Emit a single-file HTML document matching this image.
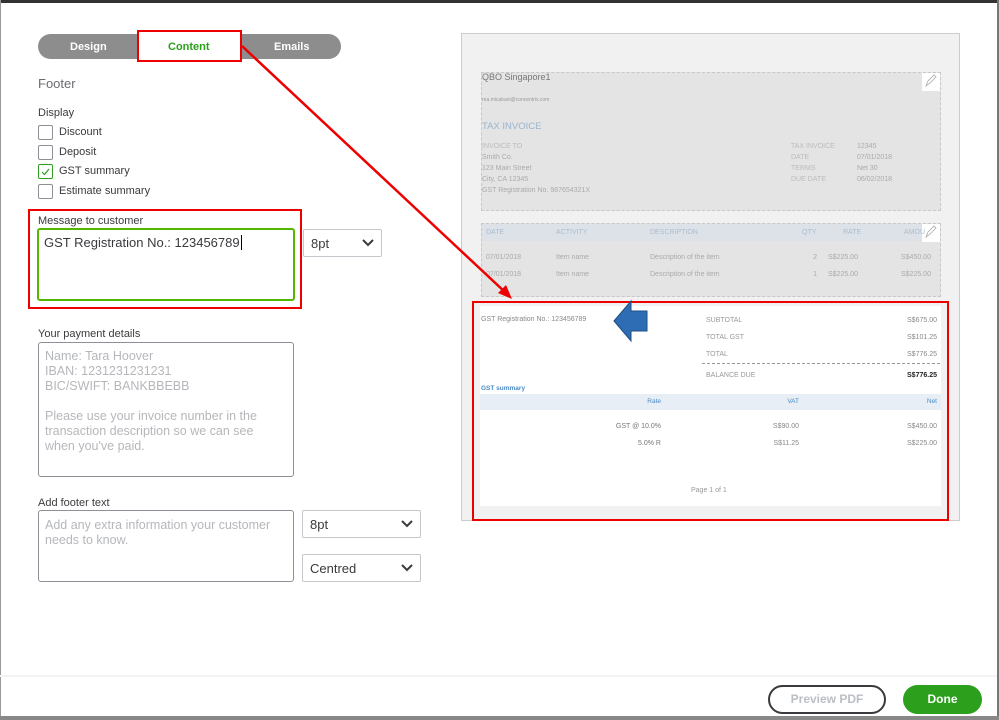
<!DOCTYPE html>
<html><head><meta charset="utf-8"><style>
*{box-sizing:border-box;margin:0;padding:0}
body{width:999px;height:720px;background:#fff;position:relative;overflow:hidden;font-family:"Liberation Sans",sans-serif;color:#393a3d}
.a{position:absolute}
.lbl{font-size:11px;color:#393a3d}
.cb{position:absolute;width:15px;height:15px;border:1px solid #8d9096;border-radius:2px;background:#fff}
.ta{position:absolute;border:1px solid #8d9096;border-radius:3px;background:#fff}
.ph{color:#b5b7bb;font-size:12.5px;line-height:15px}
.sel{position:absolute;border:1px solid #c4c6cb;border-radius:2px;background:#fff;font-size:13px;color:#393a3d;padding:6px 0 0 7px}
.sel svg{position:absolute;right:7px;top:9px}
.s{font-size:7px;color:#999}
.r{text-align:right}
</style></head><body>
<div class="a" style="left:0;top:0;width:999px;height:3px;background:#333"></div>
<div class="a" style="left:0;top:0;width:1px;height:720px;background:#999"></div>
<div class="a" style="left:997px;top:0;width:2px;height:720px;background:#777"></div>
<div class="a" style="left:0;top:716px;width:999px;height:4px;background:#888"></div>
<div class="a" style="left:0;top:675px;width:997px;height:2px;background:#f3f3f6"></div>

<!-- tabs -->
<div class="a" style="left:38px;top:34px;width:303px;height:25px;background:#8d8d8d;border-radius:13px"></div>
<div class="a" style="left:70px;top:41px;font-size:11px;font-weight:bold;color:#fff">Design</div>
<div class="a" style="left:274px;top:41px;font-size:11px;font-weight:bold;color:#fff">Emails</div>
<div class="a" style="left:137px;top:30px;width:105px;height:32px;background:#fff;border:2px solid #e00"></div>
<div class="a" style="left:168px;top:41px;font-size:11px;font-weight:bold;color:#2ca01c">Content</div>

<div class="a" style="left:38px;top:76px;font-size:13px;color:#6b6c72">Footer</div>
<div class="a lbl" style="left:38px;top:107px">Display</div>
<div class="cb" style="left:38px;top:125px"></div><div class="a lbl" style="left:59px;top:126px">Discount</div>
<div class="cb" style="left:38px;top:145px"></div><div class="a lbl" style="left:59px;top:146px">Deposit</div>
<div class="cb" style="left:38px;top:164px;border-color:#2ca01c"><svg width="13" height="13" viewBox="0 0 13 13"><path d="M3 7l2.5 2.5L10 4" stroke="#2ca01c" fill="none" stroke-width="1.2"/></svg></div><div class="a lbl" style="left:59px;top:165px">GST summary</div>
<div class="cb" style="left:38px;top:184px"></div><div class="a lbl" style="left:59px;top:185px">Estimate summary</div>

<div class="a" style="left:28px;top:209px;width:274px;height:100px;border:2px solid #e00"></div>
<div class="a lbl" style="left:38px;top:215px">Message to customer</div>
<div class="ta" style="left:37px;top:228px;width:258px;height:73px;border:2px solid #53b700"></div>
<div class="a" style="left:44px;top:235px;font-size:13px;color:#393a3d">GST Registration No.: 123456789<span style="border-left:1px solid #000;margin-left:1px"></span></div>
<div class="sel" style="left:303px;top:229px;width:79px;height:28px">8pt<svg width="12" height="8"><path d="M1 1l5 5 5-5" stroke="#393a3d" stroke-width="2" fill="none"/></svg></div>

<div class="a lbl" style="left:38px;top:328px">Your payment details</div>
<div class="ta" style="left:38px;top:342px;width:256px;height:135px"></div>
<div class="a ph" style="left:45px;top:349px">Name: Tara Hoover<br>IBAN: 1231231231231<br>BIC/SWIFT: BANKBBEBB<br><br>Please use your invoice number in the<br>transaction description so we can see<br>when you've paid.</div>

<div class="a lbl" style="left:38px;top:497px">Add footer text</div>
<div class="ta" style="left:38px;top:510px;width:256px;height:72px"></div>
<div class="a ph" style="left:45px;top:518px">Add any extra information your customer<br>needs to know.</div>
<div class="sel" style="left:302px;top:510px;width:119px;height:28px">8pt<svg width="12" height="8"><path d="M1 1l5 5 5-5" stroke="#393a3d" stroke-width="2" fill="none"/></svg></div>
<div class="sel" style="left:302px;top:554px;width:119px;height:28px">Centred<svg width="12" height="8"><path d="M1 1l5 5 5-5" stroke="#393a3d" stroke-width="2" fill="none"/></svg></div>

<!-- preview -->
<div class="a" style="left:461px;top:33px;width:499px;height:488px;background:#f1f1f1;border:1px solid #ccc"></div>
<div class="a" style="left:481px;top:72px;width:460px;height:139px;background:#e4e4e4;border:1px dashed #c8c8c8"></div>
<div class="a" style="left:922px;top:73px;width:18px;height:18px;background:#fff"></div>
<div class="a" style="left:482px;top:72px;font-size:9px;color:#777">QBO Singapore1</div>
<div class="a s" style="left:482px;top:97px;font-size:5px">rea.micabani@concentrix.com</div>
<div class="a" style="left:482px;top:121px;font-size:9.5px;color:#9ab4cc">TAX INVOICE</div>
<div class="a s" style="left:482px;top:141px;line-height:11px;color:#bbb">INVOICE TO<br><span style="color:#aaa">Smith Co.<br>123 Main Street<br>City, CA 12345<br>GST Registration No. 987654321X</span></div>
<div class="a s" style="left:791px;top:141px;line-height:11px;color:#bbb">TAX INVOICE<br>DATE<br>TERMS<br>DUE DATE</div>
<div class="a s" style="left:857px;top:141px;line-height:11px;color:#aaa">12345<br>07/01/2018<br>Net 30<br>06/02/2018</div>

<div class="a" style="left:481px;top:223px;width:460px;height:74px;background:#e4e4e4;border:1px dashed #c8c8c8"></div>
<div class="a" style="left:482px;top:224px;width:458px;height:17px;background:#dde2e8"></div>
<div class="a" style="left:922px;top:224px;width:18px;height:18px;background:#fff"></div>
<div class="a s" style="left:486px;top:229px;color:#a9bdd0">DATE</div>
<div class="a s" style="left:556px;top:229px;color:#a9bdd0">ACTIVITY</div>
<div class="a s" style="left:650px;top:229px;color:#a9bdd0">DESCRIPTION</div>
<div class="a s" style="left:802px;top:229px;color:#a9bdd0">QTY</div>
<div class="a s" style="left:843px;top:229px;color:#a9bdd0">RATE</div>
<div class="a s" style="left:904px;top:229px;color:#a9bdd0">AMOU</div>
<div class="a s" style="left:486px;top:249px;line-height:17px;color:#aaa">07/01/2018<br>07/01/2018</div>
<div class="a s" style="left:556px;top:249px;line-height:17px;color:#aaa">Item name<br>Item name</div>
<div class="a s" style="left:650px;top:249px;line-height:17px;color:#aaa">Description of the item<br>Description of the item</div>
<div class="a s r" style="left:800px;top:249px;width:17px;line-height:17px;color:#aaa">2<br>1</div>
<div class="a s" style="left:828px;top:249px;line-height:17px;color:#aaa">S$225.00<br>S$225.00</div>
<div class="a s" style="left:901px;top:249px;line-height:17px;color:#aaa">S$450.00<br>S$225.00</div>

<div class="a" style="left:480px;top:306px;width:461px;height:200px;background:#fff"></div>
<div class="a s" style="left:481px;top:316px;color:#888">GST Registration No.: 123456789</div>
<div class="a s" style="left:706px;top:312px;line-height:17px;color:#999">SUBTOTAL<br>TOTAL GST<br>TOTAL</div>
<div class="a s r" style="left:860px;top:312px;width:77px;line-height:17px;color:#888">S$675.00<br>S$101.25<br>S$776.25</div>
<div class="a" style="left:702px;top:363px;width:238px;border-top:1px dashed #999"></div>
<div class="a s" style="left:706px;top:372px;color:#999">BALANCE DUE</div>
<div class="a s r" style="left:860px;top:372px;width:77px;color:#222;font-weight:bold">S$776.25</div>
<div class="a s" style="left:481px;top:385px;color:#4a8ac4;font-weight:bold;font-size:6.5px">GST summary</div>
<div class="a" style="left:480px;top:394px;width:461px;height:16px;background:#e8eef5"></div>
<div class="a s r" style="left:600px;top:398px;width:61px;color:#4a8ac4;font-size:6.5px">Rate</div>
<div class="a s r" style="left:740px;top:398px;width:59px;color:#4a8ac4;font-size:6.5px">VAT</div>
<div class="a s r" style="left:880px;top:398px;width:57px;color:#4a8ac4;font-size:6.5px">Net</div>
<div class="a s r" style="left:560px;top:418px;width:101px;line-height:17px;color:#777">GST @ 10.0%<br>5.0% R</div>
<div class="a s r" style="left:740px;top:418px;width:59px;line-height:17px;color:#888">S$90.00<br>S$11.25</div>
<div class="a s r" style="left:860px;top:418px;width:77px;line-height:17px;color:#888">S$450.00<br>S$225.00</div>
<div class="a s" style="left:691px;top:487px;color:#999">Page 1 of 1</div>

<div class="a" style="left:472px;top:301px;width:477px;height:220px;border:2px solid #e00"></div>

<svg class="a" style="left:0;top:0" width="999" height="720">
<path d="M242 46L506 293" stroke="#e00" stroke-width="2.5"/>
<path d="M512 299L498 293L506 285Z" fill="#e00"/>
<path d="M614 321L631 301V311H647V331H631V341Z" fill="#2e6db4" stroke="#1f4f86" stroke-width="1"/>
<path d="M926 86l2-5 6-6 2 2-6 6z" stroke="#aaa" fill="none" stroke-width="0.8"/>
<path d="M926 237l2-5 6-6 2 2-6 6z" stroke="#aaa" fill="none" stroke-width="0.8"/>
</svg>

<div class="a" style="left:768px;top:685px;width:118px;height:29px;border:2px solid #393a3d;border-radius:15px;text-align:center;font-size:12px;font-weight:bold;color:#babec5;line-height:25px">Preview PDF</div>
<div class="a" style="left:903px;top:685px;width:79px;height:29px;background:#2ca01c;border-radius:15px;text-align:center;font-size:12px;font-weight:bold;color:#fff;line-height:29px">Done</div>
</body></html>
